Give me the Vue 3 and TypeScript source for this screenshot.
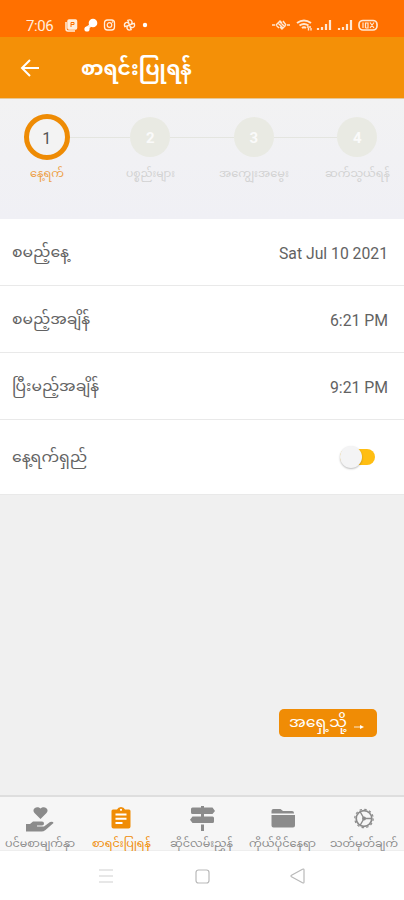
<script setup lang="ts">
interface Label { text: string; width: number }
interface Step extends Label { n: number }
interface Row extends Label { value?: string; valueWidth?: number; height: number }
interface Tab extends Label { icon: string; active?: boolean }

const steps: Step[] = [
  { n: 1, text: 'နေ့ရက်', width: 34 },
  { n: 2, text: 'ပစ္စည်းများ', width: 49 },
  { n: 3, text: 'အကျွေးအမွေး', width: 70 },
  { n: 4, text: 'ဆက်သွယ်ရန်', width: 65 },
]
const rows: Row[] = [
  { text: 'စမည့်နေ့', width: 57, value: 'Sat Jul 10 2021', valueWidth: 109, height: 67 },
  { text: 'စမည့်အချိန်', width: 78, value: '6:21 PM', valueWidth: 58, height: 67 },
  { text: 'ပြီးမည့်အချိန်', width: 87, value: '9:21 PM', valueWidth: 58, height: 67 },
  { text: 'နေ့ရက်ရှည်', width: 75, height: 75 },
]
const tabs: Tab[] = [
  { icon: 'home', text: 'ပင်မစာမျက်နှာ', width: 70 },
  { icon: 'list', text: 'စာရင်းပြုရန်', width: 59, active: true },
  { icon: 'guide', text: 'ဆိုင်လမ်းညွှန်', width: 63 },
  { icon: 'folder', text: 'ကိုယ်ပိုင်နေရာ', width: 67 },
  { icon: 'gear', text: 'သတ်မှတ်ချက်', width: 68 },
]
</script>

<template>
  <div class="screen">
    <div class="status">
      <span class="clock">7:06</span>
      <svg class="notes" width="90" height="16" viewBox="0 0 90 16" fill="none" stroke="#ffeedd" stroke-width="1.500">
        <path d="M3 5v7q0 2 2 2h7" />
        <rect x="5" y="3" width="8.500" height="9" rx="1" fill="#ffeedd" />
        <path d="M8 10V5.500h3v2H8" stroke="#ff7200" stroke-width="1" />
        <path d="M23 12l5-4" stroke-width="3" />
        <circle cx="30" cy="6" r="4.300" fill="#fff" stroke="none" /><circle cx="24" cy="12" r="2.600" fill="#fff" stroke="none" />
        <rect x="41.500" y="3" width="10" height="10" rx="3" stroke-width="1.300" /><circle cx="46.500" cy="8" r="2.300" stroke-width="1.200" /><circle cx="49.500" cy="5" r=".4" stroke-width="1" />
        <g transform="rotate(-20 66.500 8)" stroke-width="1.300"><path d="M66.500 8V3q3.500 0 3.500 2.500T66.500 8h5q0 3.500-2.500 3.500T66.500 8v5q-3.500 0-3.500-2.500T66.500 8h-5q0-3.500 2.500-3.500T66.500 8z" /></g>
        <circle cx="82" cy="8" r="2.200" fill="#fff" stroke="none" />
      </svg>
      <svg class="signals" width="110" height="16" viewBox="0 0 110 16" fill="none" stroke="#ffe7d2" stroke-width="1.400">
        <path d="M0 8h3M15 8h3M4 8l4-4 2 2M14 8l-4 4-2-2M6 6l5 5M8 5l5 5M4 8l3 3M11 4l3 4" />
        <path d="M25 6q7-5 14 0M27.500 8.500q4.500-3 9 0M30 11q2-1.500 4 0" stroke-width="2" />
        <path d="M35 10h4m-2.500 1v2.500m2.500-2.500v2.500" />
        <path d="M46 13v-2m4 2v-3m4 3V7m4 6V3M67 13v-2m4 2v-3m4 3V7m4 6V3" stroke-width="2.200" />
        <rect x="87" y="3.500" width="18" height="9.500" rx="4" stroke-width="1.700" />
        <path d="M91 5.500v5.500m2.500 0V6H96v5h-2.500m4.500-5.500 4 5.500m0-5.500-4 5.500" stroke-width="1.200" />
      </svg>
    </div>

    <header class="bar">
      <svg class="back" width="20" height="18" viewBox="0 0 20 18" fill="none" stroke="#fff" stroke-width="2"><path d="M19 9H2M10 1 2 9l8 8" /></svg>
      <h1><svg class="line" width="111" height="36"><text x="0" y="25" textLength="111" lengthAdjust="spacingAndGlyphs">စာရင်းပြုရန်</text></svg></h1>
    </header>

    <section class="steps">
      <div v-for="s in steps" :key="s.n" class="step" :class="{ current: s.n === 1 }">
        <div class="node"><span class="disc">{{ s.n }}</span></div>
        <svg class="line" :width="s.width" height="22"><text x="0" y="12" :textLength="s.width" lengthAdjust="spacingAndGlyphs">{{ s.text }}</text></svg>
      </div>
    </section>

    <section class="rows">
      <div v-for="r in rows" :key="r.text" class="row" :style="{ height: r.height + 'px' }">
        <svg class="line" :width="r.width" height="34"><text x="0" y="22" :textLength="r.width" lengthAdjust="spacingAndGlyphs">{{ r.text }}</text></svg>
        <svg v-if="r.value" class="line" :width="r.valueWidth" height="34"><text x="0" y="24" :textLength="r.valueWidth" lengthAdjust="spacingAndGlyphs">{{ r.value }}</text></svg>
        <span v-else class="toggle"><i class="knob"></i></span>
      </div>
    </section>

    <main class="space">
      <button class="next">
        <svg class="line" width="58" height="28"><text x="0" y="18" textLength="58" lengthAdjust="spacingAndGlyphs">အရှေ့သို့</text></svg>
        <svg class="arrow" width="10" height="8" viewBox="0 0 10 8"><path d="M0 5h7" stroke="#fff" stroke-width=".8" /><path d="M6 3l4 2-4 2z" fill="#fff" /></svg>
      </button>
    </main>

    <nav class="tabs">
      <div v-for="t in tabs" :key="t.icon" class="tab" :class="{ active: t.active }">
        <svg class="icon" width="30" height="28" viewBox="0 0 30 28">
          <g v-if="t.icon === 'home'" fill="currentColor">
            <path d="M15.500 13 9.500 7C6 3 12-1 15.500 2.500c3.500-3.500 9.500.5 6 4.500z" />
            <path d="M1 18h4l3-2.500h9q2 0 2 2t-2 2h-5v1h7l6-4.500q3-1 3.500 1l-8 7q-2 1.500-4 1.500H1z" />
          </g>
          <template v-else-if="t.icon === 'list'">
            <path d="M7 3.500h4q1-2.500 4-2.500t4 2.500h4q1.500 0 1.500 1.500v15.500q0 2-2 2H7.500q-2 0-2-2V5q0-1.500 1.500-1.500z" fill="currentColor" />
            <path d="M9.500 8.500h11M9.500 12.800h11M9.500 17h7" stroke="#fff" stroke-width="2" /><circle cx="15" cy="3.800" r="1.100" fill="#fff" />
          </template>
          <path v-else-if="t.icon === 'guide'" fill="currentColor" d="M14 0h3v1.500h8.500L28 5l-2.500 3H5.500q-1.500 0-1.500-1.500V3q0-1.500 1.500-1.500H14zM14 8h3v2.500h8.500q1.500 0 1.500 1.500v3.500q0 1.500-1.500 1.500h-20L3 13.800l2.500-3.300H14zM14 18.500h3V25h-3z" />
          <g v-else-if="t.icon === 'folder'" fill="currentColor">
            <path d="M3.500 7.500V5q0-2 2-2h7l2.500 2h9q2 0 2 2v.5zM3.500 9H27v10.500q0 2-2 2H5.500q-2 0-2-2z" />
          </g>
          <g v-else fill="none" stroke="currentColor">
            <circle cx="15" cy="12.500" r="7.800" stroke-width="1.700" /><circle cx="15" cy="12.500" r="9.200" stroke-width="1.200" stroke-dasharray="2.400 2.420" />
            <path d="M15 12.500h8M15 12.500l-4-7M15 12.500l-4 7" stroke-width="1.400" /><circle cx="15" cy="12.500" r="2" fill="currentColor" stroke="none" />
          </g>
        </svg>
        <svg class="line" :width="t.width" height="20"><text x="0" y="12.500" :textLength="t.width" lengthAdjust="spacingAndGlyphs">{{ t.text }}</text></svg>
      </div>
    </nav>

    <footer class="system">
      <svg width="210" height="18" viewBox="0 0 210 18" fill="none" stroke="#b9b9b9" stroke-width="1.200">
        <path d="M2 4h14M2 10h14M2 16h14" stroke="#cfcfcf" />
        <rect x="99" y="4" width="13" height="13" rx="2.500" />
        <path d="M207 4v12q0 1.500-1.500.7l-11-6q-1-.7 0-1.400l11-6Q207 2.500 207 4z" />
      </svg>
    </footer>
  </div>
</template>

<style>
body { margin: 0; }
</style>
<style scoped>
.screen { width: 404px; height: 900px; display: flex; flex-direction: column; background: #f0f0f0; font-family: Roboto, "Noto Sans Myanmar", "Noto Sans", sans-serif; overflow: hidden; }
.line { display: block; overflow: visible; fill: currentColor; flex: none; }
.status { height: 37px; flex: none; background: #ff7000; display: flex; padding: 17px 22px 0 26px; box-sizing: border-box; color: #ffeedd; }
.clock { font-size: 15px; line-height: 18px; width: 37px; letter-spacing: -0.4px; }
.notes { flex: none; }
.signals { margin-left: auto; }
.bar { height: 62px; flex: none; background: #f49007; display: flex; align-items: center; padding-left: 20px; color: #fff; border-bottom: 1px solid #e7c896; box-sizing: border-box; }
.bar h1 { margin: 0 0 0 41px; font-size: 19px; font-weight: 700; }
.steps { height: 120px; flex: none; display: flex; padding-top: 15px; box-sizing: border-box; background: linear-gradient(#f2f2f3, #f0f0f5); justify-content: center; margin: 0 -5px; }
.step { width: 103.500px; display: flex; flex-direction: column; align-items: center; color: #d2d2d2; font-size: 10px; }
.node { width: 100%; height: 46px; display: flex; align-items: center; margin-bottom: 5px; }
.node::before, .node::after { content: ""; flex: 1; height: 1px; background: #e4e5e0; }
.step:first-child .node::before, .step:last-child .node::after { background: none; }
.disc { width: 40px; height: 40px; border-radius: 50%; background: #e9eae3; color: #fafafa; display: flex; align-items: center; justify-content: center; font-size: 15px; font-weight: 700; box-sizing: border-box; padding-top: 2px; }
.current { color: #eda046; }
.current .disc { width: 46px; height: 46px; border: 5px solid #ee8b04; background: #f3f3f3; color: #555; font-weight: 400; font-size: 16px; }
.row { box-sizing: border-box; background: #fff; border-bottom: 1px solid #e9e9e9; display: flex; align-items: center; justify-content: space-between; padding: 0 16px 0 12px; font-size: 16px; color: #626262; }
.row .line:first-child { font-size: 15px; }
.toggle { width: 35px; height: 16px; border-radius: 8px; background: #ffbe12; margin-right: 13px; display: flex; align-items: center; }
.knob { width: 22px; height: 22px; border-radius: 50%; background: #f4f4f5; box-shadow: 0 1px 2px #0004; flex: none; }
.space { flex: 1; display: flex; align-items: flex-end; justify-content: flex-end; padding: 0 27px 58px 0; }
.next { width: 98px; height: 28px; border: 0; border-radius: 5px; background: #f08c05; color: #fff; display: flex; align-items: center; padding: 0 10px; gap: 7px; font: 14.500px Roboto, "Noto Sans Myanmar", sans-serif; }
.arrow { margin-top: 5px; }
.tabs { height: 56px; flex: none; box-sizing: border-box; border-top: 2px solid #dedede; border-bottom: 1px solid #eee; background: #f6f6f6; display: flex; }
.tab { flex: 1; display: flex; flex-direction: column; align-items: center; padding-top: 9px; color: #8b8b8b; font-size: 10.500px; }
.active { color: #f08c05; }
.icon { flex: none; }
.system { height: 49px; flex: none; background: #fff; display: flex; justify-content: center; padding-top: 15px; box-sizing: border-box; }
</style>
